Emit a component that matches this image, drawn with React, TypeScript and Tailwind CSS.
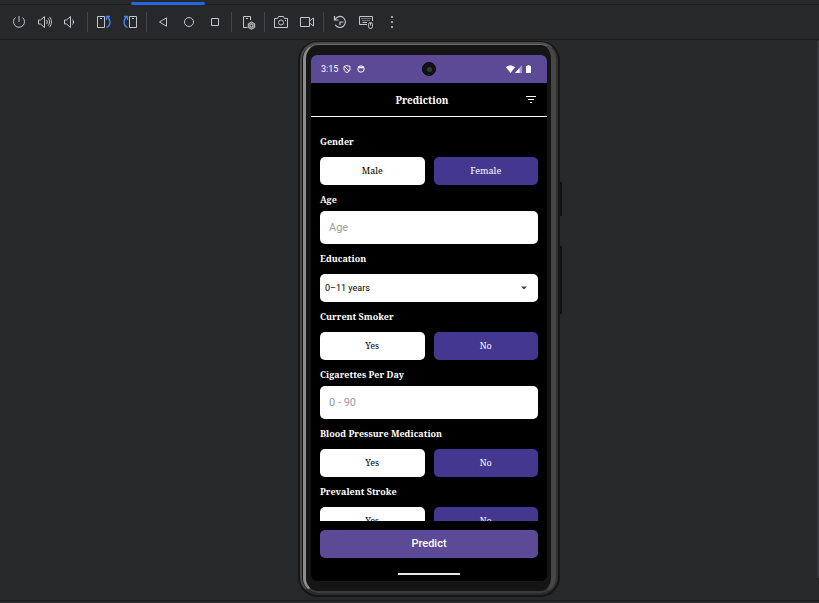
import type { ReactNode } from "react";

function Icon({ children, label }: { children: ReactNode; label: string }) {
  return (
    <button type="button" aria-label={label} className="flex h-6 w-[26px] items-center justify-center text-[#c3c5cb]">
      <svg width="16" height="16" viewBox="0 0 16 16" fill="none" stroke="currentColor" strokeWidth="1">
        {children}
      </svg>
    </button>
  );
}

function Divider() {
  return <span className="mx-[3px] h-5 w-px bg-[#43454a]" />;
}

function Toolbar() {
  return (
    <header className="shrink-0 bg-[#27282a]">
      <div className="flex h-[5px] items-end border-b border-[#1c1d1f] pl-[131px]">
        <span className="relative top-px h-[3px] w-[74px] rounded-sm bg-[#2268e0]" />
      </div>
      <nav className="flex h-[35px] items-center border-b border-[#1a1b1c] pl-[6px]">
        <Icon label="Power">
          <path d="M8 2v6M4.500 3.500a5.500 5.500 0 1 0 7 0" />
        </Icon>
        <Icon label="Volume up">
          <path d="M1.500 6h2l4-3.500v11l-4-3.500h-2zM9.500 6c1 1.200 1 2.800 0 4M11 4.300c2 2 2 5.400 0 7.400M12.500 2.800c2.600 2.800 2.600 7.600 0 10.400" />
        </Icon>
        <Icon label="Volume down">
          <path d="M1.500 6h2l4-3.500v11l-4-3.500h-2zM9.500 5.500c1.500 1.400 1.500 3.600 0 5M9.500 8h1" />
        </Icon>
        <Divider />
        <Icon label="Rotate left">
          <path d="M1.500 2.500h7v11h-7zM4 4.500h2" />
          <path d="M10.500 13.500c4.500-2 4.500-8 .5-11M10.500 6V2.500H14" stroke="#4682f0" strokeWidth="1.300" />
        </Icon>
        <Icon label="Rotate right">
          <path d="M7.500 2.500h7v11h-7zM10 4.500h2" />
          <path d="M5.500 13.500c-4.500-2-4.500-8-.5-11M5.500 6V2.500H2" stroke="#4682f0" strokeWidth="1.300" />
        </Icon>
        <Divider />
        <Icon label="Back">
          <path d="M11.500 3.800v8.400L4.500 8z" />
        </Icon>
        <Icon label="Home">
          <circle cx="8" cy="8" r="4.500" />
        </Icon>
        <Icon label="Overview">
          <path d="M4.500 4.500h7v7h-7z" />
        </Icon>
        <Divider />
        <Icon label="Device settings">
          <path d="M7.500 13.500h-4v-11h7V6M6 4.500h2" />
          <path d="M11.500 8l3.200 1.800v3.700l-3.200 1.800-3.200-1.800V9.800z" fill="#77797e" />
          <circle cx="11.500" cy="11.600" r="1.400" fill="#27282a" />
        </Icon>
        <Divider />
        <Icon label="Screenshot">
          <path d="M1.500 4.500h3l1-2h5l1 2h3v9h-13zM12 6.500h1" />
          <circle cx="8" cy="8.500" r="2.500" />
        </Icon>
        <Icon label="Record">
          <path d="M1.500 3.500h9v9h-9zM10.500 7l4-3v8l-4-3" />
        </Icon>
        <Divider />
        <Icon label="Snapshots">
          <path d="M2.500 2v4h4M3 5.500a5.500 5.500 0 1 1 .2 5.300M8 11V8h3.500" strokeWidth="1.200" />
        </Icon>
        <Icon label="Keyboard input">
          <path d="M9 10.500H1.500v-8h13V7" />
          <path d="M3.500 4.500h9M4.500 6.500h7" strokeDasharray="1 1" />
          <path d="M4.500 8.500H9" />
          <rect x="10.500" y="8.500" width="4" height="6" rx="2" />
          <path d="M12.500 9v2.500" />
        </Icon>
        <Icon label="More">
          <g fill="currentColor" stroke="none">
            <circle cx="8" cy="3" r="1.100" />
            <circle cx="8" cy="8" r="1.100" />
            <circle cx="8" cy="13" r="1.100" />
          </g>
        </Icon>
      </nav>
    </header>
  );
}

const serif = "font-['Noto_Serif','DejaVu_Serif_Condensed','DejaVu_Serif',serif]";

function Choice({ label, options }: { label: string; options: [string, string] }) {
  return (
    <fieldset className="shrink-0 pb-[7px]">
      <legend className={`mb-[7px] text-[9px] leading-4 font-bold ${serif}`}>{label}</legend>
      <div className="grid grid-cols-2 gap-[9px]">
        <button type="button" className={`h-7 rounded-[5px] bg-white text-[9px] text-black ${serif}`}>{options[0]}</button>
        <button type="button" className={`h-7 rounded-[5px] bg-[#43378f] text-[9px] text-white ${serif}`}>{options[1]}</button>
      </div>
    </fieldset>
  );
}

function NumberField({ id, label, hint }: { id: string; label: string; hint: string }) {
  return (
    <div className="flex shrink-0 flex-col gap-[3px] pb-[7px]">
      <label htmlFor={id} className={`text-[9px] leading-4 font-bold ${serif}`}>{label}</label>
      <input id={id} placeholder={hint} className="h-[33px] w-full rounded-[5px] bg-white px-[9px] text-[11px] text-black placeholder:text-[#9a9a9a]" />
    </div>
  );
}

function StatusBar() {
  return (
    <div className="grid h-7 shrink-0 grid-cols-3 items-center bg-[#5c4a96] px-[10px] text-white">
      <div className="flex items-center gap-[5px] text-[9px] leading-3">
        <span>3:15</span>
        <svg width="8" height="8" viewBox="0 0 8 8" fill="none" stroke="white">
          <path d="M4 .6 7 1.500v2.500C7 5.800 5.500 7 4 7.500 2.500 7 1 5.800 1 4V1.500zM2 2l4 4" />
        </svg>
        <svg className="ml-px" width="8" height="8" viewBox="0 0 8 8" fill="none" stroke="white">
          <circle cx="4" cy="4" r="3.200" />
          <path d="M1 2.500h6" strokeWidth="1.500" />
        </svg>
      </div>
      <span className="flex size-[14px] items-center justify-center justify-self-center rounded-full border border-black bg-[#101214]">
        <span className="size-[5px] rounded-full bg-[#2c3b40]" />
      </span>
      <svg className="mr-[5px] justify-self-end" width="26" height="8" viewBox="0 0 26 8" fill="white">
        <path d="M0 2.200C2.500 0 6.500 0 9 2.200L4.500 8z" />
        <path d="M16 0v8H9z" opacity=".45" />
        <path d="M13.500 3v5H9z" />
        <path d="M20 1h1.500V0h2v1H25v7h-5z" />
      </svg>
    </div>
  );
}

function Screen() {
  return (
    <div className="flex min-h-0 flex-1 flex-col overflow-hidden rounded-[6px] bg-black text-white">
      <StatusBar />
      <div className="flex h-[34px] shrink-0 items-center border-b border-white pt-px pr-[10px]">
        <h1 className={`flex-1 pl-2 text-center text-[10px] font-bold ${serif}`}>Prediction</h1>
        <button type="button" aria-label="Filter">
          <svg width="12" height="8" viewBox="0 0 12 8" stroke="white">
            <path d="M1 .5h10M3 3.500h6M5 6.500h2" />
          </svg>
        </button>
      </div>
      <form className="flex min-h-0 flex-1 flex-col overflow-hidden px-[9px] pt-[17px]">
        <Choice label="Gender" options={["Male", "Female"]} />
        <NumberField id="age" label="Age" hint="Age" />
        <div className="flex shrink-0 flex-col gap-[7px] pb-[7px]">
          <label htmlFor="education" className={`text-[9px] leading-4 font-bold ${serif}`}>Education</label>
          <div className="grid items-center">
            <select id="education" className="col-start-1 row-start-1 h-7 appearance-none rounded-[5px] bg-white px-[5px] pt-px text-[9px] text-black">
              <option>0–11 years</option>
            </select>
            <svg className="pointer-events-none col-start-1 row-start-1 mr-[11px] justify-self-end" width="6" height="4" viewBox="0 0 6 4">
              <path d="M0 .5h6L3 3.500z" fill="#444" />
            </svg>
          </div>
        </div>
        <Choice label="Current Smoker" options={["Yes", "No"]} />
        <NumberField id="cigarettes" label="Cigarettes Per Day" hint="0 - 90" />
        <Choice label="Blood Pressure Medication" options={["Yes", "No"]} />
        <Choice label="Prevalent Stroke" options={["Yes", "No"]} />
      </form>
      <div className="flex shrink-0 flex-col items-center px-[9px] pt-[9px] pb-[6px]">
        <button type="button" className="h-7 w-full rounded-[5px] bg-[#5c4a96] pt-px text-[11px] font-medium">Predict</button>
        <span className="mt-[15px] h-[2px] w-[62px] bg-[#e6e6e6]" />
      </div>
    </div>
  );
}

function Phone() {
  return (
    <div className="relative flex w-[262px] rounded-[20px] border-2 border-t border-[#151515] bg-[#151515]">
      <div className="flex flex-1 rounded-[18px] border-t-2 border-r-2 border-b-2 border-l-2 border-t-[#4a4a4a] border-r-[#303030] border-b-[#2c2c2c] border-l-[#4a4a4a] bg-[#151515] pl-px">
        <div className="flex flex-1 flex-col rounded-[15px] border-t border-r-5 border-b-2 border-l-3 border-t-[#6a6a6a] border-r-[#474747] border-b-[#3c3c3c] border-l-[#8c8c8c] bg-[#151515] pt-[10px] pr-[4px] pb-[10px] pl-[5px]">
          <Screen />
        </div>
      </div>
      <span className="absolute top-[140px] -right-[4px] h-[34px] w-[2px] bg-[#101010]" />
      <span className="absolute top-[204px] -right-[4px] h-[68px] w-[2px] bg-[#101010]" />
    </div>
  );
}

export default function App() {
  return (
    <div className="flex h-screen flex-col bg-[#27282a] font-['Roboto',sans-serif]">
      <Toolbar />
      <main className="flex min-h-0 flex-1 pt-px">
        <div className="flex flex-1 justify-center pb-[3px] pl-[41px]">
          <Phone />
        </div>
        <div className="mb-[22px] w-[2px] bg-[#35363a]" />
      </main>
      <footer className="h-[3px] shrink-0 border-t border-[#1a1b1c]" />
    </div>
  );
}
